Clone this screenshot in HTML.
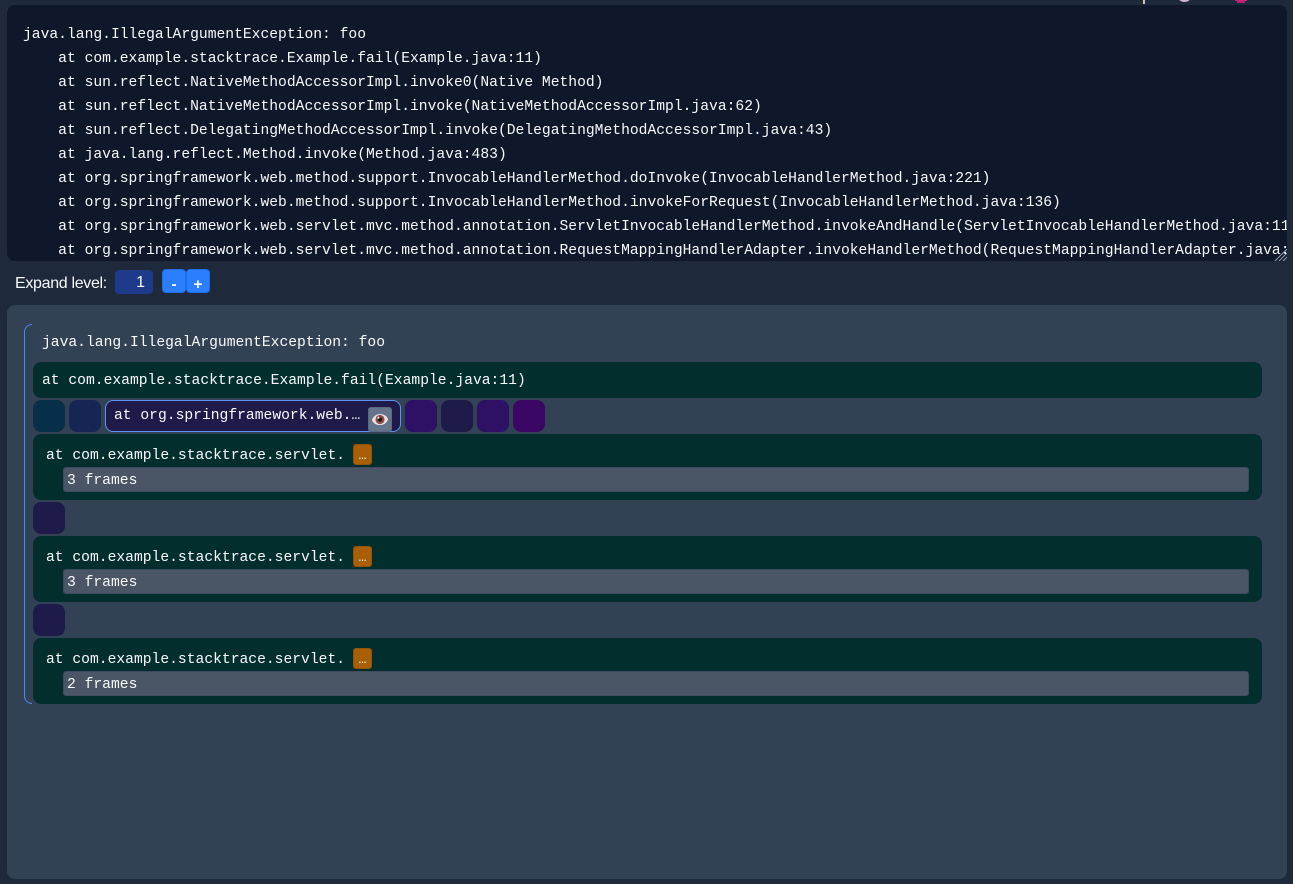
<!DOCTYPE html>
<html><head><meta charset="utf-8"><style>
html,body{margin:0;padding:0;width:1293px;height:884px;overflow:hidden;background:#1e293b}
div{position:absolute;box-sizing:border-box}
.m{font:14.667px/24px "Liberation Mono",monospace;color:#f8fafc;white-space:pre}
#ta{left:7px;top:5px;width:1280px;height:256px;background:#0f172a;border-radius:8px;overflow:hidden}
#ta .m{left:16px;top:18px}
.row{left:33px;width:1229px;background:#022f2e;border-radius:8px}
.b{width:32px;height:32px;border-radius:8px}
.fr{left:63px;width:1186px;height:25px;background:#4a5565;border:1px solid #3f4a5e;border-radius:3px}
.fr .m{left:3px;top:1px}
.dots{left:353px;width:19px;height:21px;background:#a85f06;border:1px solid #8f5407;border-radius:3px;color:#f8fafc;font:13px/22px "Liberation Mono",monospace;text-align:center}
.btn{top:269px;width:24px;height:24px;background:#2b7fff;border:1px solid #1f6fe8;border-radius:4px;color:#fff;font:bold 15px/30px "Liberation Sans",sans-serif;text-align:center}
</style></head><body>
<div style="left:1143px;top:0;width:1px;height:4px;background:#f4c27a"></div>
<div style="left:1144px;top:0;width:1px;height:4px;background:#a9c8ee"></div>
<div style="left:1179px;top:-5px;width:11px;height:7px;border-radius:50%;background:#c9b8d8"></div>
<div style="left:1235px;top:0;width:12px;height:1px;background:#c9237a"></div>
<div style="left:1237px;top:1px;width:8px;height:2px;background:#b8206f"></div>
<div id="ta"><div class="m">java.lang.IllegalArgumentException: foo
    at com.example.stacktrace.Example.fail(Example.java:11)
    at sun.reflect.NativeMethodAccessorImpl.invoke0(Native Method)
    at sun.reflect.NativeMethodAccessorImpl.invoke(NativeMethodAccessorImpl.java:62)
    at sun.reflect.DelegatingMethodAccessorImpl.invoke(DelegatingMethodAccessorImpl.java:43)
    at java.lang.reflect.Method.invoke(Method.java:483)
    at org.springframework.web.method.support.InvocableHandlerMethod.doInvoke(InvocableHandlerMethod.java:221)
    at org.springframework.web.method.support.InvocableHandlerMethod.invokeForRequest(InvocableHandlerMethod.java:136)
    at org.springframework.web.servlet.mvc.method.annotation.ServletInvocableHandlerMethod.invokeAndHandle(ServletInvocableHandlerMethod.java:110)
    at org.springframework.web.servlet.mvc.method.annotation.RequestMappingHandlerAdapter.invokeHandlerMethod(RequestMappingHandlerAdapter.java:814)</div></div>
<svg style="position:absolute;left:1273px;top:249px" width="14" height="12"><path d="M2 12L14 0M6 12L14 4M10 12L14 8" stroke="#94a3b8" stroke-width="1" fill="none"/></svg>

<div style="left:15px;top:271px;font:16px/25px 'Liberation Sans',sans-serif;color:#f8fafc;white-space:pre;letter-spacing:-.32px">Expand level:</div>
<div style="left:115px;top:270px;width:38px;height:24px;background:#1e3a8a;border-radius:4px;color:#f8fafc;font:16px/26px 'Liberation Sans',sans-serif;text-align:right;padding-right:8px">1</div>
<div class="btn" style="left:162px">-</div>
<div class="btn" style="left:186px">+</div>

<div style="left:7px;top:305px;width:1280px;height:574px;background:#334155;border-radius:8px"></div>
<div style="left:24px;top:332px;width:1px;height:364px;background:#4b8be8"></div>
<div style="left:24px;top:324px;width:8px;height:8px;border-top:1px solid #4b8be8;border-left:1px solid #4b8be8;border-radius:8px 0 0 0"></div>
<div style="left:24px;top:696px;width:8px;height:8px;border-bottom:1px solid #4b8be8;border-left:1px solid #4b8be8;border-radius:0 0 0 8px"></div>
<div class="m" style="left:42px;top:331px">java.lang.IllegalArgumentException: foo</div>

<div class="row" style="top:362px;height:36px"><div class="m" style="left:9px;top:7px">at com.example.stacktrace.Example.fail(Example.java:11)</div></div>

<div class="b" style="left:33px;top:400px;background:#082f49"></div>
<div class="b" style="left:69px;top:400px;background:#172554"></div>
<div style="left:105px;top:400px;width:296px;height:32px;background:#1e1b4b;border:1px solid #5b95f0;border-radius:8px"><div class="m" style="left:8px;top:2px;line-height:26px">at org.springframework.web.…</div></div>
<div style="left:368px;top:407px;width:24px;height:25px;background:#64748b;border:1px solid #5a6a80;border-radius:3px"></div>
<svg style="position:absolute;left:371px;top:412px" width="18" height="15" viewBox="0 0 18 15"><path d="M1 8C3 3 7 1.5 11 2.2C14.5 3 16.5 5 17 7.5C15.5 11.5 12 13.5 8 13C4.5 12.7 2 11 1 8Z" fill="#efe4e4"/><circle cx="9" cy="7.5" r="4.6" fill="#8f4f48"/><circle cx="9" cy="7.5" r="2.2" fill="#2a1414"/><circle cx="7.4" cy="5.8" r="1" fill="#fff"/></svg>
<div class="b" style="left:405px;top:400px;background:#2e1065"></div>
<div class="b" style="left:441px;top:400px;background:#1e1b4b"></div>
<div class="b" style="left:477px;top:400px;background:#2e1065"></div>
<div class="b" style="left:513px;top:400px;background:#3b0764"></div>

<div class="row" style="top:434px;height:66px"></div>
<div class="m" style="left:46px;top:444px">at com.example.stacktrace.servlet.</div>
<div class="dots" style="top:444px">…</div>
<div class="fr" style="top:467px"><div class="m">3 frames</div></div>

<div class="b" style="left:33px;top:502px;background:#1e1b4b"></div>

<div class="row" style="top:536px;height:66px"></div>
<div class="m" style="left:46px;top:546px">at com.example.stacktrace.servlet.</div>
<div class="dots" style="top:546px">…</div>
<div class="fr" style="top:569px"><div class="m">3 frames</div></div>

<div class="b" style="left:33px;top:604px;background:#1e1b4b"></div>

<div class="row" style="top:638px;height:66px"></div>
<div class="m" style="left:46px;top:648px">at com.example.stacktrace.servlet.</div>
<div class="dots" style="top:648px">…</div>
<div class="fr" style="top:671px"><div class="m">2 frames</div></div>
</body></html>
